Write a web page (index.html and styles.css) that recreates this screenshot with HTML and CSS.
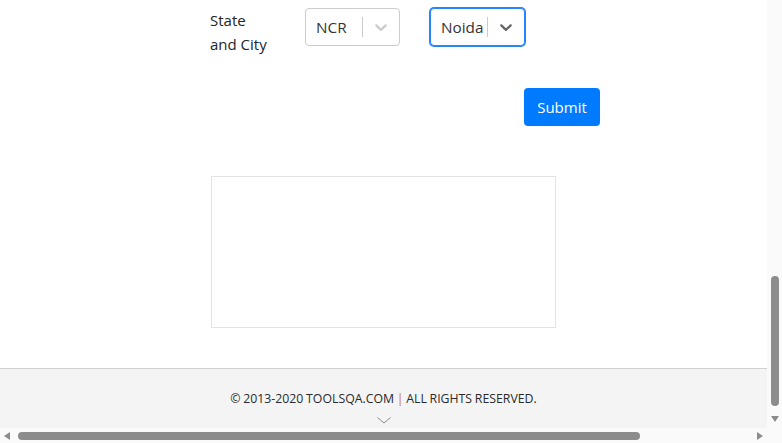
FILE: index.html
```html
<!DOCTYPE html>
<html lang="en">
<head>
<meta charset="utf-8">
<title>Practice Form</title>
<link rel="stylesheet" href="styles.css">
</head>
<body>
<div class="frame">
  <div class="viewport">
    <div class="content">
      <div class="field-row">
        <label class="field-label">State<br>and City</label>
        <div class="select">
          <div class="value">NCR</div>
          <span class="sep"></span>
          <div class="indicator">
            <svg viewBox="0 0 20 20" width="20" height="20"><path d="M4.516 7.548c0.436-0.446 1.043-0.481 1.576 0l3.908 3.747 3.908-3.747c0.533-0.481 1.141-0.446 1.574 0 0.436 0.445 0.408 1.197 0 1.615-0.406 0.418-4.695 4.502-4.695 4.502-0.217 0.223-0.502 0.335-0.787 0.335s-0.57-0.112-0.789-0.335c0 0-4.287-4.084-4.695-4.502s-0.436-1.17 0-1.615z"/></svg>
          </div>
        </div>
        <div class="select focused">
          <div class="value">Noida</div>
          <span class="sep"></span>
          <div class="indicator">
            <svg viewBox="0 0 20 20" width="20" height="20"><path d="M4.516 7.548c0.436-0.446 1.043-0.481 1.576 0l3.908 3.747 3.908-3.747c0.533-0.481 1.141-0.446 1.574 0 0.436 0.445 0.408 1.197 0 1.615-0.406 0.418-4.695 4.502-4.695 4.502-0.217 0.223-0.502 0.335-0.787 0.335s-0.57-0.112-0.789-0.335c0 0-4.287-4.084-4.695-4.502s-0.436-1.17 0-1.615z"/></svg>
          </div>
        </div>
      </div>
      <div class="submit-row">
        <button class="btn-submit" type="button">Submit</button>
      </div>
      <div class="blank-box"></div>
    </div>
    <footer class="footer">
      <div class="footer-text">© 2013-2020 TOOLSQA.COM <span class="pipe">|</span> ALL RIGHTS RESERVED.</div>
      <svg class="footer-chevron" viewBox="0 0 14 7" width="14" height="7"><path d="M0.5 0.5 L7 6 L13.5 0.5" fill="none" stroke="#8a8a8a" stroke-width="1"/></svg>
    </footer>
  </div>
  <div class="vscroll">
    <div class="vtrack"><div class="vthumb"></div></div>
    <div class="arrow-down"></div>
  </div>
  <div class="hscroll">
    <div class="arrow-left"></div>
    <div class="hthumb"></div>
    <div class="hspace"></div>
    <div class="arrow-right"></div>
  </div>
  <div class="corner"></div>
</div>
</body>
</html>
```
FILE: styles.css
```css
* { box-sizing: border-box; }
html, body { margin: 0; padding: 0; }
body {
  font-family: "Open Sans", "Noto Sans", Arial, sans-serif;
  color: #212529;
  background: #fff;
  overflow: hidden;
}
.frame {
  width: 782px;
  height: 443px;
  display: grid;
  grid-template-columns: 767px 15px;
  grid-template-rows: 428px 15px;
}
.viewport {
  display: flex;
  flex-direction: column;
  overflow: hidden;
}
.content {
  padding: 8px 0 0 210px;
}
.field-row {
  display: flex;
  align-items: flex-start;
}
.field-label {
  width: 95px;
  font-size: 15px;
  line-height: 24px;
  color: #212529;
}
.select {
  width: 95px;
  height: 38px;
  border: 1px solid #ccc;
  border-radius: 4px;
  display: flex;
  align-items: center;
  background: #fff;
}
.select.focused {
  margin-left: 30px;
  border-color: #2684ff;
  box-shadow: 0 0 0 1px #2684ff;
}
.value {
  width: 56px;
  padding: 2px 10px;
  font-size: 15.3px;
  color: #333;
  white-space: nowrap;
  line-height: 20px;
}
.sep {
  width: 1px;
  height: 20px;
  background: #ccc;
}
.indicator {
  width: 36px;
  height: 36px;
  padding: 8px;
  display: flex;
  align-items: center;
  justify-content: center;
}
.indicator svg { fill: #ccc; display: block; }
.focused .indicator svg { fill: #666; }
.submit-row {
  margin-top: 32px;
  padding-left: 314px;
}
.btn-submit {
  width: 76px;
  height: 38px;
  border: 0;
  border-radius: 4px;
  background: #007bff;
  color: #fff;
  font-family: inherit;
  font-size: 15px;
  padding: 0;
}
.blank-box {
  margin-top: 50px;
  margin-left: 1px;
  width: 345px;
  height: 152px;
  border: 1px solid #e3e3e3;
}
.footer {
  margin-top: 40px;
  height: 60px;
  border-top: 1px solid #d0d0d0;
  background: #f4f4f4;
  display: flex;
  flex-direction: column;
  align-items: center;
  padding-top: 21px;
}
.footer-text {
  font-size: 12.3px;
  line-height: 18px;
  color: #2a2a2a;
  word-spacing: -0.5px;
}
.pipe { color: #c47a2c; }
.footer-chevron {
  margin-top: 9px;
  display: block;
}
.vscroll {
  background: #fafafa;
  display: flex;
  flex-direction: column;
  align-items: center;
}
.vtrack {
  flex: 1;
  width: 100%;
  display: flex;
  flex-direction: column;
  justify-content: flex-end;
  align-items: center;
  padding-bottom: 10px;
}
.vthumb {
  width: 8px;
  height: 130px;
  border-radius: 4px;
  background: #8c8c8c;
}
.arrow-down {
  width: 0;
  height: 0;
  border-left: 4px solid transparent;
  border-right: 4px solid transparent;
  border-top: 6px solid #8c8c8c;
  margin-bottom: 6px;
}
.hscroll {
  background: #fafafa;
  display: flex;
  align-items: center;
  padding: 0 4px;
}
.arrow-left {
  width: 0;
  height: 0;
  border-top: 4px solid transparent;
  border-bottom: 4px solid transparent;
  border-right: 6px solid #8c8c8c;
}
.hthumb {
  margin-left: 8px;
  width: 622px;
  height: 8px;
  border-radius: 4px;
  background: #8c8c8c;
}
.hspace { flex: 1; }
.arrow-right {
  width: 0;
  height: 0;
  border-top: 4px solid transparent;
  border-bottom: 4px solid transparent;
  border-left: 6px solid #8c8c8c;
}
.corner { background: #fafafa; }
```
